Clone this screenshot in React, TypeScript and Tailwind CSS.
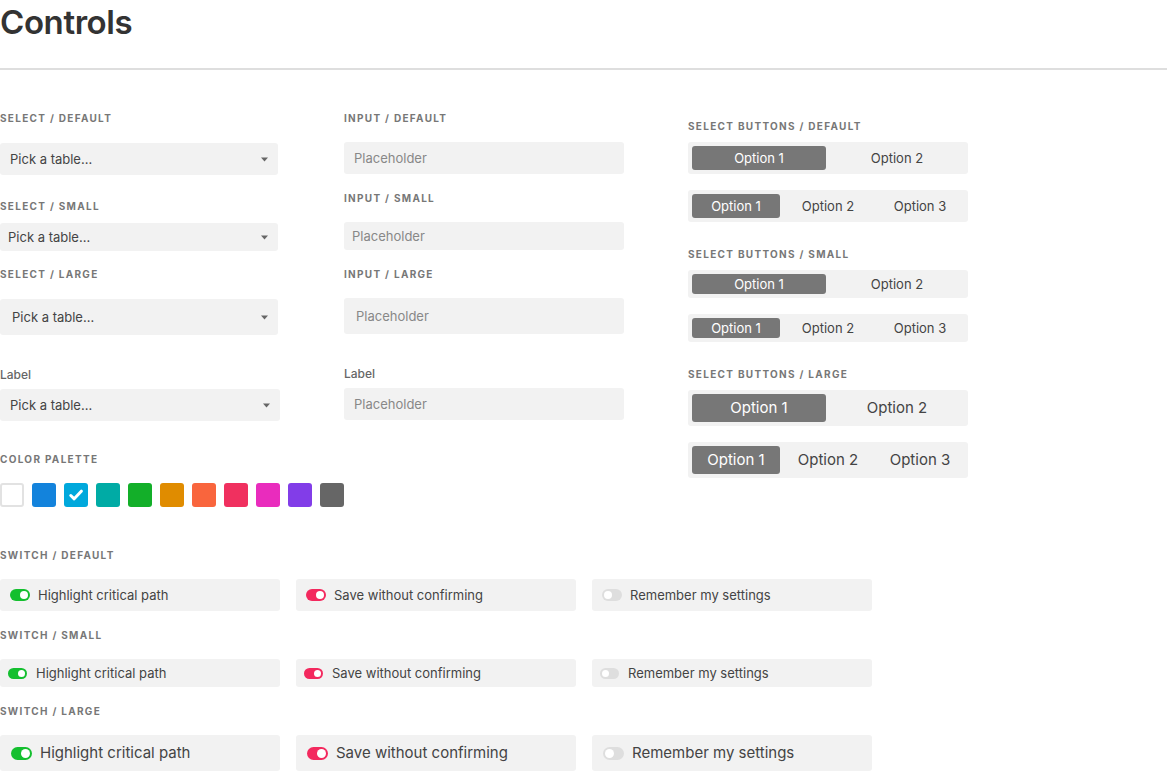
import React from 'react';

const font = { fontFamily: 'Inter, "Liberation Sans", sans-serif' };

function Caption({ children, className = '' }: { children: React.ReactNode; className?: string }) {
  return (
    <div className={`text-[10px] leading-[12px] font-bold tracking-[1.3px] text-[#777] uppercase ${className}`}>
      {children}
    </div>
  );
}

function FieldLabel({ children, className = '' }: { children: React.ReactNode; className?: string }) {
  return <div className={`text-[12px] leading-[14px] font-medium text-[#666] ${className}`}>{children}</div>;
}

function Caret() {
  return (
    <svg width="7" height="5" viewBox="0 0 7 5" className="text-[#666]">
      <path d="M0 0.5h7L3.5 4.5z" fill="currentColor" />
    </svg>
  );
}

type Size = 'sm' | 'md' | 'lg';

function Select({ size, className = '' }: { size: Size; className?: string }) {
  const h = size === 'sm' ? 'h-[28px] pl-[8px]' : size === 'lg' ? 'h-[36px] pl-[12px]' : 'h-[32px] pl-[10px]';
  return (
    <div className={`flex items-center justify-between rounded-[3px] bg-[#f2f2f2] pt-[1px] pr-[10px] text-[13px] text-[#444] ${h} ${className}`}>
      <span>Pick a table...</span>
      <Caret />
    </div>
  );
}

function Input({ size, className = '' }: { size: Size; className?: string }) {
  const h = size === 'sm' ? 'h-[28px] pl-[8px]' : size === 'lg' ? 'h-[36px] pl-[12px]' : 'h-[32px] pl-[10px]';
  return (
    <div className={`flex w-[280px] items-center rounded-[3px] bg-[#f2f2f2] pt-[1px] text-[13px] text-[#888] ${h} ${className}`}>
      Placeholder
    </div>
  );
}

function SegButtons({ size, count, className = '' }: { size: Size; count: number; className?: string }) {
  const box = size === 'sm' ? 'h-[28px]' : size === 'lg' ? 'h-[36px]' : 'h-[32px]';
  const btn = size === 'sm' ? 'h-[20px] text-[13px]' : size === 'lg' ? 'h-[28px] text-[15px]' : 'h-[24px] text-[13px]';
  const opts = Array.from({ length: count }, (_, i) => `Option ${i + 1}`);
  return (
    <div className={`flex w-[280px] items-center gap-[4px] rounded-[3px] bg-[#f2f2f2] px-[4px] ${box} ${className}`}>
      {opts.map((o, i) => (
        <div
          key={o}
          className={`flex flex-1 items-center justify-center rounded-[3px] pt-[1px] ${btn} ${
            i === 0 ? 'bg-[#777] text-white' : 'text-[#444]'
          }`}
        >
          {o}
        </div>
      ))}
    </div>
  );
}

const swatches = [
  '#ffffff',
  '#1383dc',
  '#00a8dc',
  '#00aba5',
  '#13af29',
  '#e08c00',
  '#f9653d',
  '#f0305f',
  '#e92cbd',
  '#823de8',
  '#666666',
];

function Palette() {
  return (
    <div className="flex w-max gap-[8px]">
      {swatches.map((c, i) => (
        <div
          key={c}
          className={`flex h-[24px] w-[24px] shrink-0 items-center justify-center rounded-[3px] ${
            i === 0 ? 'border-2 border-[#e2e2e2]' : ''
          }`}
          style={{ backgroundColor: c }}
        >
          {i === 2 && (
            <svg width="14" height="12" viewBox="0 0 14 12">
              <path d="M1.8 6.5l3.4 3.3L12.3 2.2" fill="none" stroke="#fff" strokeWidth="3" strokeLinecap="round" strokeLinejoin="round" />
            </svg>
          )}
        </div>
      ))}
    </div>
  );
}

type Tone = 'green' | 'red' | 'off';

function Toggle({ tone, size }: { tone: Tone; size: Size }) {
  const track =
    size === 'sm' ? 'w-[19px] h-[11px]' : size === 'lg' ? 'w-[21px] h-[13px]' : 'w-[20px] h-[12px]';
  const knob = size === 'sm' ? 'w-[7px] h-[7px]' : size === 'lg' ? 'w-[9px] h-[9px]' : 'w-[8px] h-[8px]';
  const bg = tone === 'green' ? 'bg-[#14bf2f]' : tone === 'red' ? 'bg-[#f3295e]' : 'bg-[#dedede]';
  return (
    <div
      className={`flex shrink-0 items-center rounded-full px-[2px] ${track} ${bg} ${
        tone === 'off' ? 'justify-start' : 'justify-end'
      }`}
    >
      <div className={`rounded-full bg-white ${knob}`} />
    </div>
  );
}

function SwitchRow({ size }: { size: Size }) {
  const h =
    size === 'sm'
      ? 'h-[28px] pl-[8px] gap-[9px] text-[13px]'
      : size === 'lg'
      ? 'h-[36px] pl-[11px] gap-[8px] text-[15px]'
      : 'h-[32px] pl-[10px] gap-[8px] text-[13px]';
  const items: [Tone, string][] = [
    ['green', 'Highlight critical path'],
    ['red', 'Save without confirming'],
    ['off', 'Remember my settings'],
  ];
  return (
    <div className="flex gap-[16px]">
      {items.map(([tone, text]) => (
        <div key={text} className={`flex w-[280px] items-center rounded-[3px] bg-[#f2f2f2] text-[#444] ${h}`}>
          <Toggle tone={tone} size={size} />
          <span className="pt-[1px]">{text}</span>
        </div>
      ))}
    </div>
  );
}

export default function App() {
  return (
    <div className="min-h-screen bg-white" style={font}>
      {/* Header */}
      <h1 className="mt-[2px] h-[40px] text-[33px] leading-[40px] font-semibold tracking-[-0.4px] text-[#333]">Controls</h1>
      <div className="mt-[26px] h-[2px] w-full bg-[#dedede]" />

      {/* Top controls */}
      <div className="flex gap-[64px]">
        {/* Selects */}
        <div className="flex w-[280px] flex-col">
          <Caption className="mt-[42px]">Select / Default</Caption>
          <Select size="md" className="mt-[19px] w-[278px]" />
          <Caption className="mt-[25px]">Select / Small</Caption>
          <Select size="sm" className="mt-[11px] w-[278px]" />
          <Caption className="mt-[17px]">Select / Large</Caption>
          <Select size="lg" className="mt-[19px] w-[278px]" />
          <FieldLabel className="mt-[33px]">Label</FieldLabel>
          <Select size="md" className="mt-[7px] w-[280px]" />
          <Caption className="mt-[32px]">Color Palette</Caption>
          <div className="mt-[18px]">
            <Palette />
          </div>
        </div>

        {/* Inputs */}
        <div className="flex w-[280px] flex-col">
          <Caption className="mt-[42px]">Input / Default</Caption>
          <Input size="md" className="mt-[18px]" />
          <Caption className="mt-[18px]">Input / Small</Caption>
          <Input size="sm" className="mt-[18px]" />
          <Caption className="mt-[18px]">Input / Large</Caption>
          <Input size="lg" className="mt-[18px]" />
          <FieldLabel className="mt-[33px]">Label</FieldLabel>
          <Input size="md" className="mt-[7px]" />
        </div>

        {/* Select buttons */}
        <div className="flex w-[280px] flex-col">
          <Caption className="mt-[50px]">Select Buttons / Default</Caption>
          <SegButtons size="md" count={2} className="mt-[10px]" />
          <SegButtons size="md" count={3} className="mt-[16px]" />
          <Caption className="mt-[26px]">Select Buttons / Small</Caption>
          <SegButtons size="sm" count={2} className="mt-[10px]" />
          <SegButtons size="sm" count={3} className="mt-[16px]" />
          <Caption className="mt-[26px]">Select Buttons / Large</Caption>
          <SegButtons size="lg" count={2} className="mt-[10px]" />
          <SegButtons size="lg" count={3} className="mt-[16px]" />
        </div>
      </div>

      {/* Switches */}
      <Caption className="mt-[42px]">Switch / Default</Caption>
      <div className="mt-[18px]">
        <SwitchRow size="md" />
      </div>
      <Caption className="mt-[18px]">Switch / Small</Caption>
      <div className="mt-[18px]">
        <SwitchRow size="sm" />
      </div>
      <Caption className="mt-[18px]">Switch / Large</Caption>
      <div className="mt-[18px]">
        <SwitchRow size="lg" />
      </div>
    </div>
  );
}
